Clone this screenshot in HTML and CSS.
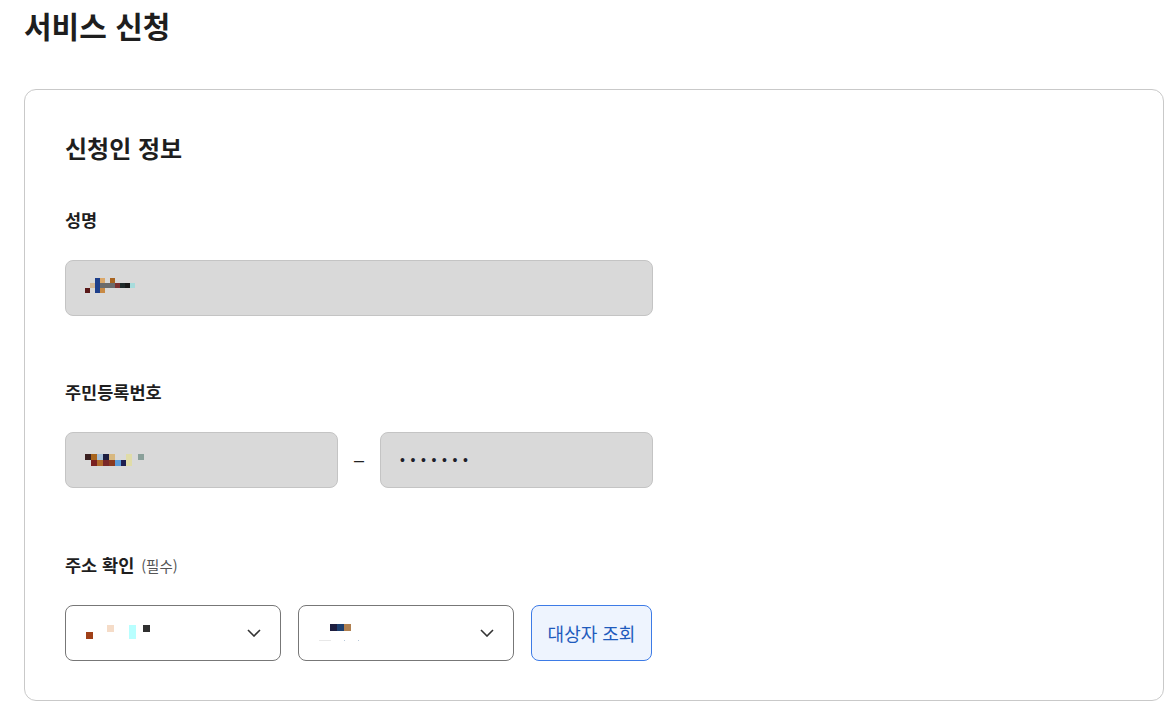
FILE: index.html
```html
<!DOCTYPE html>
<html lang="ko">
<head>
<meta charset="utf-8">
<title>서비스 신청</title>
<link rel="stylesheet" href="styles.css">
</head>
<body>
<div class="page">
  <h1 class="page-title">서비스 신청</h1>
  <section class="card">
    <h2 class="section-title">신청인 정보</h2>

    <div class="field">
      <div class="label">성명</div>
      <div class="input">
        <svg class="mosaic" width="60" height="20" viewBox="0 0 60 20">
          <rect x="0" y="10" width="5" height="5" fill="#5a1a1a"/>
          <rect x="5" y="5" width="5" height="5" fill="#d4b896"/>
          <rect x="10" y="0" width="5" height="15" fill="#1e3f8a"/>
          <rect x="15" y="0" width="5" height="5" fill="#dba86a"/>
          <rect x="15" y="5" width="15" height="5" fill="#6b6b6b"/>
          <rect x="15" y="10" width="5" height="5" fill="#c88a45"/>
          <rect x="25" y="0" width="5" height="5" fill="#a86420"/>
          <rect x="30" y="5" width="5" height="5" fill="#7a2f2f"/>
          <rect x="35" y="5" width="5" height="5" fill="#1e2a2a"/>
          <rect x="40" y="5" width="5" height="5" fill="#1a1a1a"/>
          <rect x="45" y="5" width="5" height="5" fill="#a8dcdc"/>
        </svg>
      </div>
    </div>

    <div class="field field-id">
      <div class="label">주민등록번호</div>
      <div class="id-row">
        <div class="input">
          <svg class="mosaic" width="60" height="12" viewBox="0 0 60 12">
            <rect x="0" y="0" width="6" height="6" fill="#3a2020"/>
            <rect x="6" y="0" width="6" height="6" fill="#a8651e"/>
            <rect x="12" y="0" width="6" height="6" fill="#a8c0d8"/>
            <rect x="18" y="0" width="6" height="6" fill="#1e1e40"/>
            <rect x="24" y="0" width="6" height="6" fill="#d8b880"/>
            <rect x="6" y="6" width="6" height="6" fill="#7a2020"/>
            <rect x="12" y="6" width="6" height="6" fill="#b06a2a"/>
            <rect x="18" y="6" width="6" height="6" fill="#7a2828"/>
            <rect x="24" y="6" width="6" height="6" fill="#8a3a20"/>
            <rect x="30" y="6" width="6" height="6" fill="#5a9ad8"/>
            <rect x="36" y="6" width="6" height="6" fill="#1e1e50"/>
            <rect x="41" y="0" width="6" height="12" fill="#e0dca8"/>
            <rect x="53" y="0" width="6" height="6" fill="#8aa09a"/>
          </svg>
        </div>
        <span class="dash">–</span>
        <div class="input">
          <span class="dots">•••••••</span>
        </div>
      </div>
    </div>

    <div class="field field-addr">
      <div class="label">주소 확인 <span class="hint">(필수)</span></div>
      <div class="addr-row">
        <div class="select">
          <svg class="mosaic" width="70" height="16" viewBox="0 0 70 16">
            <rect x="0" y="7" width="7" height="7" fill="#a04018"/>
            <rect x="21" y="0" width="7" height="7" fill="#f5dcc8"/>
            <rect x="43" y="0" width="7" height="14" fill="#b8ffff"/>
            <rect x="57" y="0" width="7" height="7" fill="#303030"/>
          </svg>
          <svg class="chev" width="14" height="8" viewBox="0 0 14 8"><path d="M1 1l6 6 6-6" fill="none" stroke="#333" stroke-width="1.6"/></svg>
        </div>
        <div class="select">
          <svg class="mosaic" width="70" height="18" viewBox="0 0 70 18">
            <rect x="11" y="0" width="7" height="7" fill="#1e1e40"/>
            <rect x="18" y="0" width="7" height="7" fill="#1e4070"/>
            <rect x="25" y="0" width="7" height="7" fill="#b08050"/>
            <rect x="0" y="16" width="12" height="1" fill="#e8e8e8"/>
            <rect x="25" y="16" width="1" height="1" fill="#b8c8d8"/>
            <rect x="39" y="16" width="1" height="1" fill="#b8c8d8"/>
          </svg>
          <svg class="chev" width="14" height="8" viewBox="0 0 14 8"><path d="M1 1l6 6 6-6" fill="none" stroke="#333" stroke-width="1.6"/></svg>
        </div>
        <button class="btn-lookup" type="button">대상자 조회</button>
      </div>
    </div>
  </section>
</div>
</body>
</html>
```

FILE: styles.css
```css
* { box-sizing: border-box; }
html, body { margin: 0; padding: 0; background: #fff; }
body {
  font-family: "Noto Sans CJK KR", "Noto Sans", sans-serif;
  color: #1e1e1e;
}
.page {
  padding: 5px 5px 0 24px;
}
.page-title {
  margin: 0;
  font-size: 30px;
  line-height: 40px;
  font-weight: 700;
  color: #1e1e1e;
}
.card {
  margin-top: 44px;
  border: 1px solid #c9c9c9;
  border-radius: 12px;
  padding: 40px 40px 39px 40px;
}
.section-title {
  margin: 0 0 42px 0;
  font-size: 24px;
  line-height: 36px;
  font-weight: 700;
}
.field-id { margin-top: 64px; }
.field-addr { margin-top: 65px; }
.label {
  height: 24px;
  font-size: 17.5px;
  line-height: 24px;
  font-weight: 700;
  margin-bottom: 28px;
  white-space: nowrap;
}
.hint {
  font-size: 14.5px;
  font-weight: 400;
  color: #555;
  margin-left: 2px;
}
.input {
  width: 588px;
  height: 56px;
  background: #d9d9d9;
  border: 1px solid #c4c4c4;
  border-radius: 8px;
  display: flex;
  align-items: center;
  padding: 0 19px;
}
.mosaic { display: block; }
.id-row {
  display: flex;
  align-items: center;
  width: 588px;
}
.id-row .input { width: 273px; }
.dash {
  flex: 1;
  text-align: center;
  font-family: "Liberation Sans", sans-serif;
  font-size: 18px;
  color: #222;
}
.dots {
  font-family: "Liberation Sans", sans-serif;
  font-size: 14px;
  letter-spacing: 5.6px;
  color: #1e1e2a;
}
.addr-row {
  display: flex;
  gap: 17px;
  align-items: stretch;
}
.select {
  width: 216px;
  height: 56px;
  border: 1px solid #777;
  border-radius: 8px;
  background: #fff;
  display: flex;
  align-items: center;
  justify-content: space-between;
  padding: 0 19px 0 20px;
}
.chev { display: block; }
.btn-lookup {
  width: 121px;
  height: 56px;
  border: 1px solid #3d7be6;
  border-radius: 8px;
  background: #eef4fe;
  color: #1f5bbd;
  font-family: inherit;
  font-size: 18px;
  padding: 0;
  cursor: pointer;
}
```
